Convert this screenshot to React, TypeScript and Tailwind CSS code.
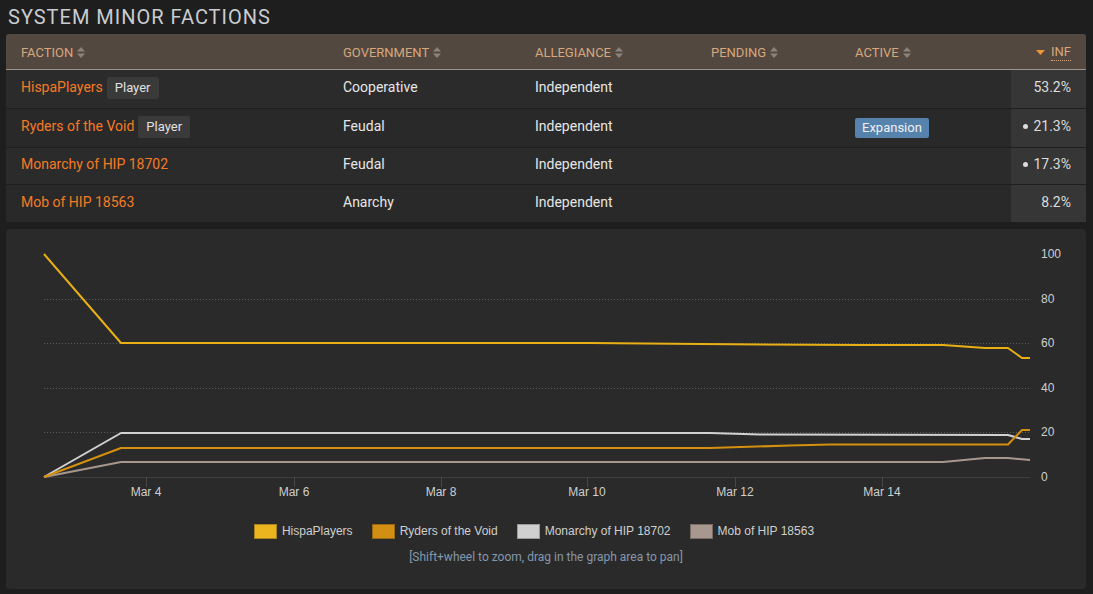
import React from "react";

const OX = 6;
const OY = 228;

type Pt = [number, number];

const series: { name: string; color: string; box: string; border: string; pts: Pt[] }[] = [
  {
    name: "HispaPlayers",
    color: "#e8b014",
    box: "#ebb520",
    border: "#a8821a",
    pts: [
      [44, 253], [121, 342], [590, 342], [700, 343], [860, 344], [943, 344], [985, 347], [1008, 347], [1022, 357], [1030, 357],
    ],
  },
  {
    name: "Ryders of the Void",
    color: "#d4900e",
    box: "#d38e14",
    border: "#9a6a12",
    pts: [
      [44, 476], [121, 447], [710, 447], [790, 444.5], [830, 443.5], [1008, 443.5], [1022, 429], [1030, 429],
    ],
  },
  {
    name: "Monarchy of HIP 18702",
    color: "#d2d2d2",
    box: "#cfcfcf",
    border: "#9a9a9a",
    pts: [
      [44, 476], [121, 432], [710, 432], [760, 433.5], [1008, 434], [1022, 438], [1030, 438],
    ],
  },
  {
    name: "Mob of HIP 18563",
    color: "#a8978d",
    box: "#a8978e",
    border: "#7a6c64",
    pts: [
      [44, 476], [121, 461], [943, 461], [985, 457], [1008, 457], [1030, 459],
    ],
  },
];

const grid = [
  { v: "100", y: 253, line: false },
  { v: "80", y: 298, line: true },
  { v: "60", y: 342, line: true },
  { v: "40", y: 387, line: true },
  { v: "20", y: 431, line: true },
  { v: "0", y: 476, line: false },
];

const ticks = [
  { l: "Mar 4", x: 146 },
  { l: "Mar 6", x: 294 },
  { l: "Mar 8", x: 441 },
  { l: "Mar 10", x: 587 },
  { l: "Mar 12", x: 735 },
  { l: "Mar 14", x: 882 },
];

function SortIcon() {
  return (
    <svg width="8" height="11" viewBox="0 0 8 11" className="ml-[4px] inline-block">
      <path d="M4 0 L8 4.5 L0 4.5 Z" fill="#8c8279" />
      <path d="M0 6.5 L8 6.5 L4 11 Z" fill="#8c8279" />
    </svg>
  );
}

function Chart() {
  return (
    <svg width="1080" height="294" viewBox="0 0 1080 294" className="block">
      {grid
        .filter((g) => g.line)
        .map((g) => (
          <line
            key={g.v}
            x1={44 - OX}
            x2={1030 - OX}
            y1={g.y - OY + 0.5}
            y2={g.y - OY + 0.5}
            stroke="#5a5a5a"
            strokeWidth="1"
            strokeDasharray="1 2"
          />
        ))}
      <line x1={44 - OX} x2={1030 - OX} y1={476 - OY + 0.5} y2={476 - OY + 0.5} stroke="#3f3f3f" strokeWidth="1" />
      {ticks.map((t) => (
        <g key={t.l}>
          <line x1={t.x - OX + 0.5} x2={t.x - OX + 0.5} y1={476 - OY} y2={486 - OY} stroke="#484848" strokeWidth="1" />
          <text
            x={t.x - OX}
            y={495 - OY}
            textAnchor="middle"
            fontSize="12"
            fill="#cfcfcf"
            fontFamily="'Liberation Sans', Arial, sans-serif"
          >
            {t.l}
          </text>
        </g>
      ))}
      {grid.map((g) => (
        <text
          key={g.v}
          x={1041 - OX}
          y={g.y - OY + 4}
          fontSize="12"
          fill="#cfcfcf"
          fontFamily="'Liberation Sans', Arial, sans-serif"
        >
          {g.v}
        </text>
      ))}
      {series
        .slice()
        .reverse()
        .map((s) => (
          <polyline
            key={s.name}
            points={s.pts.map(([x, y]) => `${x - OX},${y - OY}`).join(" ")}
            fill="none"
            stroke={s.color}
            strokeWidth="2"
            strokeLinejoin="round"
          />
        ))}
    </svg>
  );
}

const rows = [
  { name: "HispaPlayers", player: true, gov: "Cooperative", alleg: "Independent", active: "", inf: "53.2%", dot: false },
  { name: "Ryders of the Void", player: true, gov: "Feudal", alleg: "Independent", active: "Expansion", inf: "21.3%", dot: true },
  { name: "Monarchy of HIP 18702", player: false, gov: "Feudal", alleg: "Independent", active: "", inf: "17.3%", dot: true },
  { name: "Mob of HIP 18563", player: false, gov: "Anarchy", alleg: "Independent", active: "", inf: "8.2%", dot: false },
];

const cols = "grid grid-cols-[322px_192px_176px_144px_171px_75px]";

export default function App() {
  return (
    <div
      className="w-[1093px] h-[594px] overflow-hidden bg-[#1e1e1e] pl-[6px] pr-[7px] pt-[5px]"
      style={{ fontFamily: "Roboto, 'Noto Sans', sans-serif" }}
    >
      <h1 className="pl-[2px] text-[20px] leading-[24px] h-[29px] text-[#c9ccd0] tracking-[1px]">SYSTEM MINOR FACTIONS</h1>
      <div className="w-[1080px] rounded-t-[3px] overflow-hidden bg-[#2b2b2b]">
        <div className={`${cols} h-[36px] pt-[2px] bg-[#524840] border-b border-[#a0948a] text-[13px] text-[#d8a77c] items-center`}>
          <div className="pl-[15px] flex items-center">FACTION<SortIcon /></div>
          <div className="pl-[15px] flex items-center">GOVERNMENT<SortIcon /></div>
          <div className="pl-[15px] flex items-center">ALLEGIANCE<SortIcon /></div>
          <div className="pl-[15px] flex items-center">PENDING<SortIcon /></div>
          <div className="pl-[15px] flex items-center">ACTIVE<SortIcon /></div>
          <div className="pr-[15px] flex items-center justify-end">
            <svg width="9" height="5" viewBox="0 0 9 5" className="mr-[6px]">
              <path d="M0 0 L9 0 L4.5 5 Z" fill="#f0933a" />
            </svg>
            <span className="border-b border-dotted border-[#d8a77c] leading-[16px]">INF</span>
          </div>
        </div>
        {rows.map((r, i) => (
          <div
            key={r.name}
            className={`${cols} ${i % 2 === 0 ? "bg-[#2b2b2b]" : "bg-[#292929]"} ${i < 3 ? "border-b border-[#1f1f1f]" : ""} ${i === 0 || i === 1 ? "h-[39px]" : "h-[37px]"} text-[14px] text-[#e6e6e6] items-center`}
          >
            <div className="pl-[15px] flex items-center pb-[3px]">
              <span className="text-[#f47b25]">{r.name}</span>
              {r.player && (
                <span className="ml-[4px] mt-[1px] h-[22px] px-[8px] flex items-center rounded-[2px] bg-[#3a3a3a] text-[13px] text-[#e0e0e0]">
                  Player
                </span>
              )}
            </div>
            <div className="pl-[15px] pb-[3px]">{r.gov}</div>
            <div className="pl-[15px] pb-[3px]">{r.alleg}</div>
            <div className="pl-[15px]"></div>
            <div className="pl-[15px] flex items-center">
              {r.active && (
                <span className="h-[20px] px-[7px] flex items-center rounded-[2px] bg-[#5583ad] text-[13px] text-[#f0f0f0]">
                  {r.active}
                </span>
              )}
            </div>
            <div className="h-full bg-[#363636] pr-[15px] pb-[3px] flex items-center justify-end text-[#dcdcdc]">
              {r.dot && <span className="w-[5px] h-[5px] rounded-full bg-[#dcdcdc] mr-[5px]"></span>}
              {r.inf}
            </div>
          </div>
        ))}
      </div>
      <div className="mt-[7px] w-[1080px] h-[360px] rounded-[4px] bg-[#2a2a2a]">
        <Chart />
        <div
          className="flex items-center justify-center h-[16px] gap-[19px] text-[12px] text-[#cfcfcf] pr-[24px]"
          style={{ fontFamily: "'Liberation Sans', Arial, sans-serif" }}
        >
          {series.map((s) => (
            <div key={s.name} className="flex items-center gap-[5px]">
              <span className="w-[23px] h-[15px] border" style={{ background: s.box, borderColor: s.border }}></span>
              <span>{s.name}</span>
            </div>
          ))}
        </div>
        <div className="mt-[10px] text-center text-[12px] leading-[16px] text-[#8598ab]">
          [Shift+wheel to zoom, drag in the graph area to pan]
        </div>
      </div>
    </div>
  );
}
